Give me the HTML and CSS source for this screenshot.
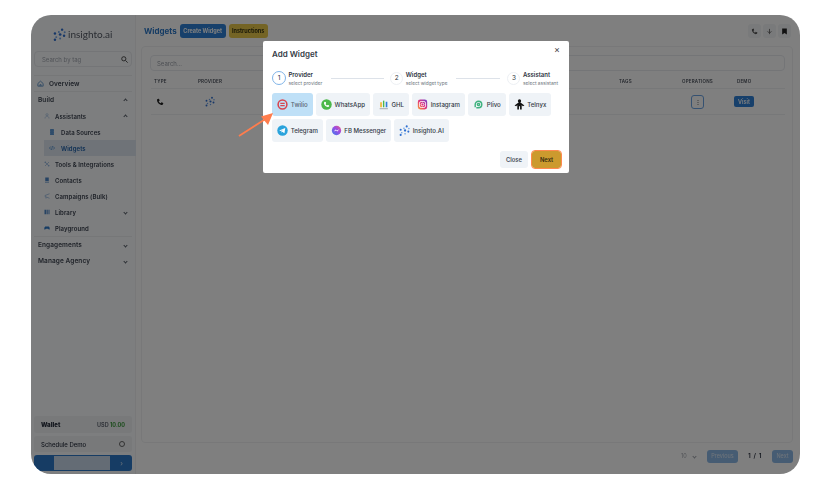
FILE: index.html
```html
<!DOCTYPE html>
<html lang="en">
  <head>
    <meta charset="UTF-8" />
    <title>Add Widget</title>
    <link rel="stylesheet" href="styles.css">
  </head>
  <body>
    <svg class="defs" width="0" height="0">
      <symbol id="dots" viewBox="0 0 20 20">
        <circle cx="14" cy="2.500" r="1.900" fill="#2f6fd0"/>
        <circle cx="18" cy="6.500" r="1.500" fill="#6fa4e8"/>
        <circle cx="9" cy="6" r="1.500" fill="#6fa4e8"/>
        <circle cx="3" cy="8.500" r="1.900" fill="#2f6fd0"/>
        <circle cx="11" cy="10" r="2.100" fill="#2f6fd0"/>
        <circle cx="17" cy="12" r="1.900" fill="#2f6fd0"/>
        <circle cx="5" cy="14" r="1.500" fill="#6fa4e8"/>
        <circle cx="11" cy="16" r="1.500" fill="#6fa4e8"/>
        <circle cx="3" cy="18" r="1.900" fill="#2f6fd0"/>
      </symbol>
    </svg>

    <div class="app">
      <aside class="sidebar">
        <div class="logo">
          <svg class="logo-mark"><use href="#dots"/></svg>
          <span>insighto.ai</span>
        </div>
        <div class="tag-search">
          <span>Search by tag</span>
          <svg width="7" height="7" viewBox="0 0 10 10" fill="none" stroke="#333" stroke-width="1.200"><circle cx="4" cy="4" r="3"/><path d="M6.500 6.500 9.500 9.500"/></svg>
        </div>
        <nav class="nav">
          <div class="nav-row overview">
            <svg class="ic" viewBox="0 0 12 12" fill="none" stroke="#5f93c9" stroke-width="1.500"><path d="M1.500 6 6 2l4.500 4v4.500h-9Z"/><path d="M5 10.500V8h2v2.500"/></svg>Overview
          </div>
          <div class="nav-row group">Build<b class="chev up"></b></div>
          <div class="nav-row sub">
            <svg class="ic" viewBox="0 0 12 12" fill="none" stroke="#a9c4e4" stroke-width="1.400"><circle cx="6" cy="3.500" r="2.200"/><path d="M2 11c0-6 8-6 8 0"/></svg>Assistants<b class="chev up"></b>
          </div>
          <div class="nav-row subsub">
            <svg class="ic" viewBox="0 0 12 12" fill="#2c78c8"><rect x="2" y="0.500" width="8" height="3" rx="1.200"/><rect x="2" y="4.500" width="8" height="3" rx="1.200"/><rect x="2" y="8.500" width="8" height="3" rx="1.200"/></svg>Data Sources
          </div>
          <div class="nav-row subsub active">
            <svg class="ic" viewBox="0 0 12 12" fill="none" stroke="#2c78c8" stroke-width="1.200"><path d="M3.500 3 1 6l2.500 3M8.500 3 11 6 8.500 9M7 2 5 10"/></svg>Widgets
          </div>
          <div class="nav-row sub">
            <svg class="ic" viewBox="0 0 12 12" fill="none" stroke="#8db2dc" stroke-width="1.400"><path d="M2 2l8 8M10 2l-8 8"/><circle cx="2.500" cy="2.500" r="1"/><circle cx="9.500" cy="9.500" r="1"/></svg>Tools &amp; Integrations
          </div>
          <div class="nav-row sub">
            <svg class="ic" viewBox="0 0 12 12" fill="#4d86c6"><path d="M2.500 1h7v7h-7Z"/><path d="M2 9.500h8V11H2Z"/></svg>Contacts
          </div>
          <div class="nav-row sub">
            <svg class="ic" viewBox="0 0 12 12" fill="none" stroke="#8db2dc" stroke-width="1.400"><path d="M11 1.500 2 5v2l9 3.500M4 8v3"/></svg>Campaigns (Bulk)
          </div>
          <div class="nav-row sub">
            <svg class="ic" viewBox="0 0 12 12" fill="#4d86c6"><path d="M1 1.500h3v9H1ZM5 1.500h2.500v9H5ZM9 1.500h2v9H9Z"/></svg>Library<b class="chev"></b>
          </div>
          <div class="nav-row sub last">
            <svg class="ic" viewBox="0 0 12 12" fill="#2c78c8"><path d="M2.500 3h7c1.500 0 2.500 5 1.500 6s-2-1-3-1.500H4C3 8 2 10 1 9S1 3 2.500 3Z"/></svg>Playground
          </div>
          <div class="nav-row group">Engagements<b class="chev"></b></div>
          <div class="nav-row group">Manage Agency<b class="chev"></b></div>
        </nav>
        <div class="side-bottom">
          <div class="side-box wallet"><strong>Wallet</strong><span>USD <em>10.00</em></span></div>
          <div class="side-box demo"><span>Schedule Demo</span><i class="clock"></i></div>
          <div class="account"><i class="account-name"></i><span>›</span></div>
        </div>
      </aside>

      <main class="main">
        <header class="topbar">
          <h1>Widgets</h1>
          <button class="btn btn-blue">Create Widget</button>
          <button class="btn btn-yellow">Instructions</button>
          <div class="top-icons">
            <span class="top-icon">
              <svg width="7" height="7" viewBox="0 0 24 24" fill="#555"><path d="M5 3 9 2l2 6-3 2c1 3 3 5 6 6l2-3 6 2-1 4c-1 2-3 2-5 2C9 20 3 13 3 7c0-2 0-3 2-4Z"/></svg>
            </span>
            <span class="top-icon">
              <svg width="7" height="7" viewBox="0 0 24 24" fill="none" stroke="#666" stroke-width="3"><path d="M12 3v18M5 12c0 4 14 4 14 0"/></svg>
            </span>
            <span class="top-icon">
              <svg width="7" height="7" viewBox="0 0 24 24" fill="#222"><path d="M4 2h16v20l-8-5-8 5Z"/></svg>
            </span>
          </div>
        </header>

        <section class="card">
          <div class="search">Search...</div>
          <div class="table-row table-head">
            <span>TYPE</span><span>PROVIDER</span><span>TAGS</span><span>OPERATIONS</span><span>DEMO</span>
          </div>
          <div class="table-row table-body">
            <span>
              <svg class="type-icon" width="8" height="8" viewBox="0 0 24 24" fill="#222"><path d="M5 3 9 2l2 6-3 2c1 3 3 5 6 6l2-3 6 2-1 4c-1 2-3 2-5 2C9 20 3 13 3 7c0-2 0-3 2-4Z"/></svg>
            </span>
            <span><svg class="provider-logo"><use href="#dots"/></svg></span>
            <span></span>
            <span><button class="ops">⋮</button></span>
            <span><button class="visit">Visit</button></span>
          </div>
        </section>

        <footer class="pager">
          <span class="page-size">10<b class="chev"></b></span>
          <button class="page-btn prev">Previous</button>
          <span class="page-count">1 / 1</span>
          <button class="page-btn next">Next</button>
        </footer>
      </main>

      <div class="overlay"></div>

      <div class="modal">
        <div class="modal-head">
          <h2>Add Widget</h2>
          <span class="close">×</span>
        </div>
        <div class="steps">
          <div class="step current"><span class="num">1</span><div><strong>Provider</strong><small>select provider</small></div></div>
          <i class="step-line line-a"></i>
          <div class="step"><span class="num">2</span><div><strong>Widget</strong><small>select widget type</small></div></div>
          <i class="step-line line-b"></i>
          <div class="step"><span class="num">3</span><div><strong>Assistant</strong><small>select assistant</small></div></div>
        </div>
        <div class="providers">
          <button class="provider selected w-twilio">
            <svg viewBox="0 0 20 20"><circle cx="10" cy="10" r="8" fill="none" stroke="#d8444f" stroke-width="2.800"/><path d="M6 8h8M6 12h8" stroke="#d8444f" stroke-width="2.200"/></svg>Twilio
          </button>
          <button class="provider w-whatsapp">
            <svg viewBox="0 0 20 20"><circle cx="10" cy="10" r="9.500" fill="#4cb84a"/><path d="M7 5 8.800 5.500 9.300 8 8.200 9c.6 1.300 1.500 2.200 2.800 2.800l1-1.100 2.500.6.400 1.700c-.5 1.300-1.500 1.600-2.700 1.400C8.500 14 5.800 11 5.400 7.700 5.300 6.500 5.800 5.500 7 5Z" fill="#fff"/></svg>WhatsApp
          </button>
          <button class="provider w-ghl">
            <svg viewBox="0 0 20 20"><path d="M4 6h3v9H4Z" fill="#f0b429"/><path d="M9 3h2.500v12H9Z" fill="#4cb84a"/><path d="M14 5h3v10h-3Z" fill="#2f7fd8"/><path d="M3 17h15v1.500H3Z" fill="#999"/></svg>GHL
          </button>
          <button class="provider w-instagram">
            <svg viewBox="0 0 20 20"><defs><linearGradient id="ig" x1="0" y1="1" x2="1" y2="0"><stop offset="0" stop-color="#f9a030"/><stop offset=".5" stop-color="#e0307c"/><stop offset="1" stop-color="#6a3fd0"/></linearGradient></defs><rect x="1.500" y="1" width="17" height="18" rx="4.500" fill="url(#ig)"/><rect x="4.500" y="4.500" width="11" height="11" rx="3" fill="none" stroke="#fff" stroke-width="1.500"/><circle cx="10" cy="10" r="2.500" fill="none" stroke="#fff" stroke-width="1.500"/></svg>Instagram
          </button>
          <button class="provider w-plivo">
            <svg viewBox="0 0 20 20" fill="none" stroke="#3fb27f" stroke-width="2.600"><path d="M4 15V10a6 6 0 1 1 6 6H6"/><circle cx="10" cy="10" r="2"/></svg>Plivo
          </button>
          <button class="provider w-telnyx">
            <svg viewBox="0 0 20 20" fill="#111"><circle cx="10" cy="3.500" r="3"/><path d="M10 5 19 12l-3 1-2-2v8h-3v-6H9v6H6v-8l-2 2-3-1Z"/></svg>Telnyx
          </button>
          <button class="provider w-telegram">
            <svg viewBox="0 0 20 20"><circle cx="10" cy="10" r="9.500" fill="#2aa3dc"/><path d="M4 10 15 5.500 13.500 15 9.500 12.300 8.300 14 8 11 12.500 7.500 6.800 10.800Z" fill="#fff"/></svg>Telegram
          </button>
          <button class="provider w-messenger">
            <svg viewBox="0 0 20 20"><defs><linearGradient id="fb" x1="0" y1="1" x2="1" y2="0"><stop offset="0" stop-color="#3a7bf0"/><stop offset=".6" stop-color="#a04be0"/><stop offset="1" stop-color="#f0607a"/></linearGradient></defs><circle cx="10" cy="10" r="8.500" fill="url(#fb)"/><path d="M5 12 8.500 8l2.300 1.800L15 7.500 11.500 12 9.200 10.200Z" fill="#fff"/></svg>FB Messenger
          </button>
          <button class="provider w-insighto">
            <svg><use href="#dots"/></svg>Insighto.AI
          </button>
        </div>
        <div class="modal-foot">
          <button class="foot-btn foot-close">Close</button>
          <button class="foot-btn foot-next">Next</button>
        </div>
      </div>

      <svg class="arrow" width="40" height="28" viewBox="0 0 40 28">
        <path d="M2 26 30 8" stroke="#ff7d4d" stroke-width="1.800" fill="none"/>
        <path d="M36 3 24 6.500 31 15Z" fill="#ff7d4d"/>
      </svg>
    </div>
  </body>
</html>
```

FILE: styles.css
```css
* {
  box-sizing: border-box;
}
body {
  margin: 0;
  padding: 15px 14px 18px 31px;
  background-color: white;
  font-family: Inter, "Liberation Sans", sans-serif;
  color: #2c3340;
}
.defs {
  position: absolute;
}
button {
  font-family: inherit;
  border: none;
  padding: 0;
}
.app {
  position: relative;
  display: flex;
  width: 769px;
  height: 459px;
  border-radius: 20px;
  overflow: hidden;
  background-color: white;
  filter: blur(0.4px);
}
.overlay {
  position: absolute;
  inset: 0;
  background-color: rgba(0, 0, 0, 0.5);
}

/* sidebar */
.sidebar {
  display: flex;
  flex-direction: column;
  width: 105px;
  padding: 0 3px;
  border-right: 1px solid #f0f1f3;
  background-color: #fafcfe;
}
.logo {
  display: flex;
  align-items: center;
  gap: 2px;
  height: 36px;
  padding: 2px 0 0 19px;
  font-family: Lato, sans-serif;
  font-size: 10px;
  color: #555b66;
}
.logo-mark {
  width: 13px;
  height: 13px;
}
.tag-search {
  display: flex;
  justify-content: space-between;
  align-items: center;
  height: 16px;
  padding: 0 3px 0 7px;
  border: 1px solid #e8eaee;
  border-radius: 4px;
  font-size: 6px;
  color: #a2a7b0;
}
.nav {
  flex: 1;
  margin-top: 8px;
  border-top: 1px solid #eceef1;
  font-size: 6px;
  font-weight: 600;
  letter-spacing: 0.08px;
}
.nav-row {
  display: flex;
  align-items: center;
  height: 16px;
  margin-left: 3px;
  padding-right: 4px;
  white-space: nowrap;
  color: #3c4350;
}
.overview {
  border-bottom: 1px solid #eceef1;
  margin-left: 0;
  padding-left: 3px;
  font-size: 6.500px;
}
.group {
  margin-left: 0;
  padding-left: 4px;
  font-size: 6.500px;
  color: #424955;
}
.sub {
  padding-left: 7px;
}
.subsub {
  margin-left: 10px;
  padding-left: 5px;
}
.last {
  height: 17px;
  border-bottom: 1px solid #eceef1;
  margin-left: 0;
  padding-left: 10px;
}
.active {
  width: 92px;
  background-color: #dfe7f1;
  color: #1d5fa8;
}
.ic {
  flex: none;
  width: 6px;
  height: 6px;
  margin-right: 5px;
}
.overview .ic {
  width: 7px;
  height: 7px;
  margin-right: 5px;
}
.subsub .ic {
  margin-right: 6px;
}
.chev {
  width: 3px;
  height: 3px;
  margin-left: auto;
  margin-right: 1px;
  border-right: 1px solid #5a606b;
  border-bottom: 1px solid #5a606b;
  transform: rotate(45deg);
}
.chev.up {
  transform: rotate(225deg);
}
.side-bottom {
  display: flex;
  flex-direction: column;
  gap: 3px;
  padding-bottom: 3px;
}
.side-box {
  display: flex;
  justify-content: space-between;
  align-items: center;
  height: 16px;
  padding: 0 7px;
  border-radius: 3px;
  background-color: #f0f2f5;
  font-size: 6px;
}
.wallet {
  height: 17px;
  font-weight: 700;
}
.wallet span {
  font-size: 5.500px;
  color: #6a707a;
}
.wallet em {
  font-style: normal;
  color: #3a9a3a;
}
.demo {
  font-weight: 500;
}
.clock {
  width: 6px;
  height: 6px;
  border: 1px solid #666;
  border-radius: 50%;
}
.account {
  display: flex;
  justify-content: space-between;
  align-items: center;
  height: 16px;
  padding: 1px 9px 1px 20px;
  border-radius: 3px;
  background-color: #2c78c8;
  color: #cfe0f2;
  font-size: 7px;
}
.account-name {
  width: 56px;
  height: 14px;
  background-color: #c8d8ea;
}

/* main */
.main {
  flex: 1;
  display: flex;
  flex-direction: column;
  padding: 0 7px 0 5px;
}
.topbar {
  display: flex;
  align-items: center;
  height: 31px;
  padding: 1px 0 0 3px;
}
h1 {
  margin: 0 3px 0 0;
  font-size: 8px;
  font-weight: 700;
  color: #2c78c8;
}
.btn {
  height: 14px;
  margin-right: 3px;
  border-radius: 3px;
  font-size: 5.500px;
  font-weight: 700;
}
.btn-blue {
  width: 46px;
  background-color: #2f80d6;
  color: white;
}
.btn-yellow {
  width: 39px;
  background-color: #e8c84a;
  color: #33300f;
}
.top-icons {
  display: flex;
  gap: 2px;
  margin-left: auto;
  margin-right: 2px;
}
.top-icon {
  display: flex;
  justify-content: center;
  align-items: center;
  width: 13px;
  height: 14px;
  border-radius: 3px;
  background-color: #f3f4f6;
}
.card {
  flex: 1;
  padding: 8px 7px 0 9px;
  border: 1px solid #f0f1f3;
  border-radius: 4px;
}
.search {
  display: flex;
  align-items: center;
  height: 16px;
  margin-left: -1px;
  padding-left: 6px;
  border: 1px solid #e8eaee;
  border-radius: 4px;
  font-size: 6px;
  color: #9a9fa8;
}
.table-row {
  display: grid;
  grid-template-columns: 44px 421px 63px 55px 1fr;
  padding-left: 3px;
  border-bottom: 1px solid #eef0f2;
}
.table-head {
  align-items: center;
  height: 18px;
  padding-top: 3px;
  font-size: 4.500px;
  font-weight: 600;
  letter-spacing: 0.2px;
  color: #4a505b;
}
.table-body {
  align-items: center;
  height: 26px;
}
.type-icon {
  display: block;
  margin-left: 2px;
}
.provider-logo {
  display: block;
  width: 10px;
  height: 11px;
  margin-left: 7px;
}
.ops {
  display: block;
  width: 13px;
  height: 14px;
  margin-left: 9px;
  border: 1px solid #6ba3e2;
  border-radius: 3px;
  background-color: white;
  font-size: 6px;
  color: #333;
}
.visit {
  display: block;
  width: 20px;
  height: 11px;
  margin-left: -3px;
  border-radius: 2px;
  background-color: #2f80d6;
  color: white;
  font-size: 5.500px;
  font-weight: 600;
}
.pager {
  display: flex;
  justify-content: flex-end;
  align-items: center;
  height: 31px;
  padding-bottom: 5px;
  font-size: 5.500px;
}
.page-size {
  display: flex;
  align-items: center;
  width: 28px;
  height: 13px;
  margin-right: 4px;
  padding: 0 6px;
  color: #a0a4ab;
}
.page-size .chev {
  border-color: #a0a4ab;
}
.page-btn {
  height: 13px;
  border-radius: 3px;
  background-color: #8db8e6;
  color: #dde9f5;
  font-size: 5.500px;
}
.prev {
  width: 31px;
}
.next {
  width: 21px;
}
.page-count {
  width: 34px;
  text-align: center;
  font-size: 6.500px;
  font-weight: 600;
  letter-spacing: 0.6px;
}

/* modal */
.modal {
  position: absolute;
  left: 232px;
  top: 26px;
  width: 306px;
  height: 132px;
  padding: 0 8px 0 9px;
  border-radius: 2px;
  background-color: white;
}
.modal-head {
  display: flex;
  justify-content: space-between;
  align-items: center;
  height: 25px;
}
h2 {
  margin: 0;
  font-size: 8px;
  font-weight: 600;
  color: #333a45;
}
.close {
  margin-right: 1px;
  margin-top: -8px;
  font-size: 9px;
  color: #444;
}
.steps {
  display: flex;
  align-items: center;
  height: 24px;
  padding-right: 3px;
  white-space: nowrap;
}
.step {
  display: flex;
  align-items: center;
  gap: 2.500px;
}
.num {
  display: flex;
  justify-content: center;
  align-items: center;
  width: 13px;
  height: 13px;
  border: 1px solid #edf0f4;
  border-radius: 50%;
  font-size: 6.500px;
}
.current .num {
  width: 14px;
  height: 14px;
  border-color: #7fb4e8;
}
.step strong {
  display: block;
  font-size: 6px;
  font-weight: 600;
}
.step small {
  display: block;
  margin-top: 2px;
  font-size: 4.800px;
  color: #6d737c;
}
.step-line {
  height: 1px;
  background-color: #dde2e9;
}
.line-a {
  width: 53px;
  margin: 0 6px 0 auto;
}
.line-b {
  width: 44px;
  margin: 0 7px 0 auto;
}
.providers {
  display: flex;
  flex-wrap: wrap;
  gap: 3px;
  margin-top: 3px;
}
.provider {
  display: flex;
  align-items: center;
  justify-content: center;
  gap: 2.500px;
  height: 23px;
  border-radius: 3px;
  background-color: #eff3f7;
  font-size: 6.100px;
  font-weight: 500;
  color: #333a45;
}
.provider svg {
  width: 11px;
  height: 11px;
  flex: none;
}
.selected {
  background-color: #bfe0f7;
  color: #5a6470;
}
.w-twilio { width: 41px; }
.w-whatsapp { width: 54px; }
.w-ghl { width: 36px; }
.w-instagram { width: 53px; }
.w-plivo { width: 38px; }
.w-telnyx { width: 42px; }
.w-telegram { width: 51px; }
.w-messenger { width: 65px; }
.w-insighto { width: 55px; }
.modal-foot {
  display: flex;
  justify-content: flex-end;
  gap: 4px;
  margin-top: 9px;
}
.foot-btn {
  width: 28px;
  height: 17px;
  border-radius: 3px;
  font-size: 5.800px;
  font-weight: 600;
}
.foot-close {
  background-color: #eff3f7;
  color: #444a55;
}
.foot-next {
  width: 29px;
  background-color: #cc9a2e;
  color: #332a10;
  outline: 1.500px solid #ff8a50;
}
.arrow {
  position: absolute;
  left: 206px;
  top: 95px;
}
```
